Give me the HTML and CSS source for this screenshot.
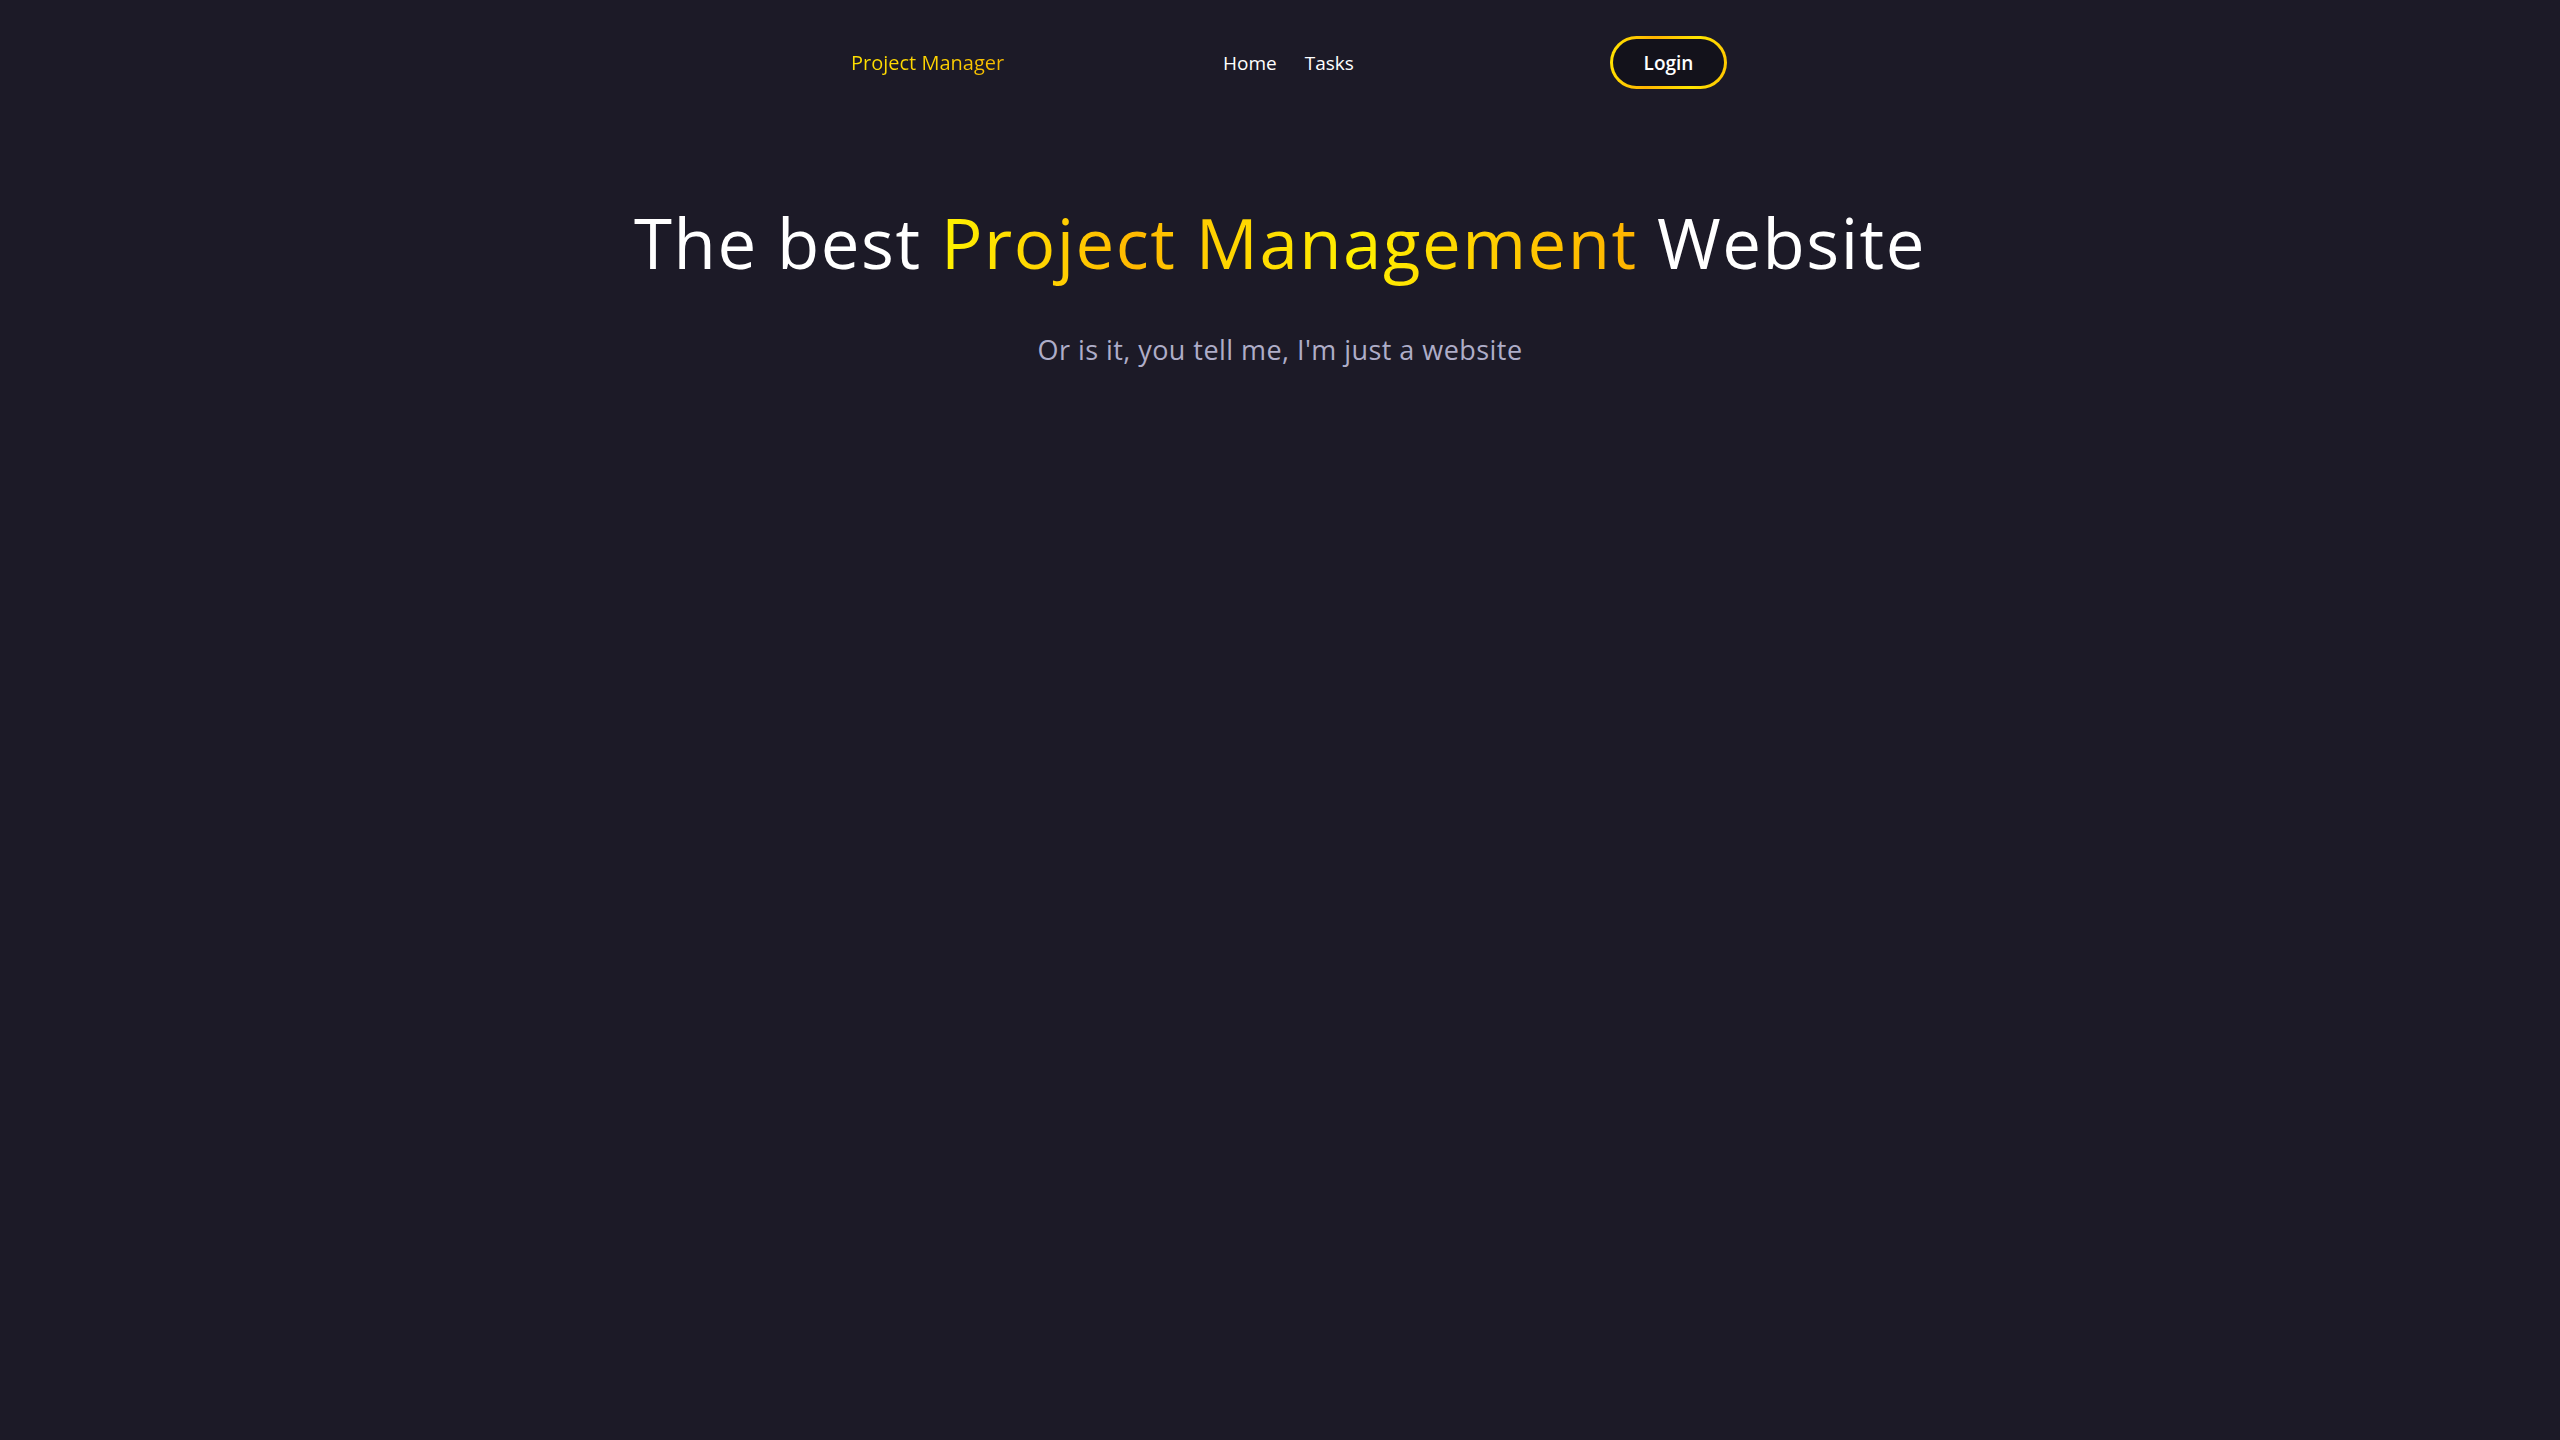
FILE: index.html
```html
<!DOCTYPE html>
<html lang="en">
<head>
<meta charset="utf-8">
<title>Project Manager</title>
<link rel="stylesheet" href="styles.css">
</head>
<body>
<header class="nav">
  <a class="logo" href="#">Project Manager</a>
  <nav class="links">
    <a href="#">Home</a>
    <a href="#">Tasks</a>
  </nav>
  <div class="actions">
    <button class="login">Login</button>
  </div>
</header>
<main class="hero">
  <h1 class="title">The best <span class="accent">Project Management</span> Website</h1>
  <p class="subtitle">Or is it, you tell me, I'm just a website</p>
</main>
</body>
</html>
```

FILE: styles.css
```css
html, body {
  margin: 0;
  padding: 0;
  background: #1c1a27;
  min-height: 100%;
}
body {
  font-family: "Open Sans", "Noto Sans", sans-serif;
  color: #ffffff;
  min-height: 1440px;
}
a { text-decoration: none; color: inherit; }

.nav {
  display: grid;
  grid-template-columns: 372px 387px 117px;
  align-items: center;
  width: 876px;
  margin: 0 0 0 851px;
  padding-top: 36px;
}
.logo {
  font-size: 20px;
  line-height: 24px;
  background: linear-gradient(90deg, #ffe000 0%, #ffd200 60%, #f2b600 100%);
  -webkit-background-clip: text;
  background-clip: text;
  color: transparent;
  justify-self: start;
}
.links {
  display: flex;
  gap: 28px;
  font-size: 19px;
  line-height: 24px;
}
.links a { color: #ffffff; }
.login {
  width: 117px;
  height: 53px;
  border-radius: 27px;
  border: 3px solid transparent;
  background:
    linear-gradient(#13121b, #13121b) padding-box,
    linear-gradient(100deg, #ffe600 0%, #ffb400 35%, #ffe600 70%, #ffc400 100%) border-box;
  color: #ffffff;
  font-family: "Open Sans", "Noto Sans", sans-serif;
  font-weight: 600;
  font-size: 19px;
  padding: 0;
  cursor: pointer;
}

.hero {
  display: flex;
  flex-direction: column;
  align-items: center;
  padding-top: 113px;
}
.title {
  margin: 0;
  font-weight: 400;
  font-size: 69px;
  letter-spacing: 1.5px;
  line-height: 80px;
  color: #ffffff;
  white-space: nowrap;
}
.accent {
  background: linear-gradient(90deg, #fff200 0%, #ffb800 28%, #ffd200 40%, #fff000 60%, #ffcc00 80%, #ffb400 100%);
  -webkit-background-clip: text;
  background-clip: text;
  color: transparent;
}
.subtitle {
  margin: 50px 0 0;
  font-size: 27px;
  letter-spacing: 0.45px;
  line-height: 36px;
  color: #aeadc8;
}
```
